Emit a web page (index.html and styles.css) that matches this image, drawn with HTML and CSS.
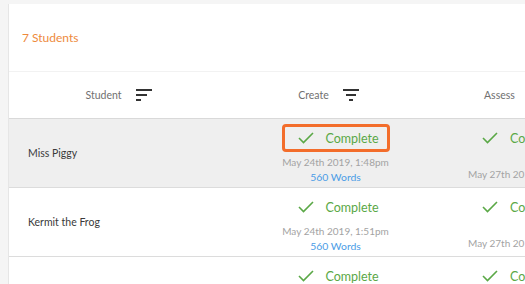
FILE: index.html
```html
<!DOCTYPE html>
<html>
<head>
<meta charset="utf-8">
<link rel="stylesheet" href="styles.css">
</head>
<body>
<div class="card">
  <div class="card-head"><span class="count">7 Students</span></div>
  <div class="table">
    <div class="th"><span>Student</span>
      <svg class="ico" width="16" height="12" viewBox="0 0 16 12"><rect x="0" y="0" width="16" height="2" fill="#333"/><rect x="0" y="5" width="11" height="2" fill="#333"/><rect x="0" y="10" width="5" height="2" fill="#333"/></svg>
    </div>
    <div class="th"><span>Create</span>
      <svg class="ico" width="16" height="12" viewBox="0 0 16 12"><rect x="0" y="0" width="16" height="2" fill="#333"/><rect x="3" y="5" width="10" height="2" fill="#333"/><rect x="6" y="10" width="4" height="2" fill="#333"/></svg>
    </div>
    <div class="th"><span>Assess</span>
      <svg class="ico" width="16" height="12" viewBox="0 0 16 12"><rect x="0" y="0" width="16" height="2" fill="#333"/><rect x="3" y="5" width="10" height="2" fill="#333"/><rect x="6" y="10" width="4" height="2" fill="#333"/></svg>
    </div>

    <div class="td name sel">Miss Piggy</div>
    <div class="td cell sel">
      <div class="status active"><svg class="chk" width="16" height="12" viewBox="0 0 16 12"><polyline points="1,6 5.5,10.5 15,1" fill="none" stroke="#5aa846" stroke-width="1.6"/></svg><span>Complete</span></div>
      <div class="date">May 24th 2019, 1:48pm</div>
      <div class="words">560 Words</div>
    </div>
    <div class="td cell sel">
      <div class="status"><svg class="chk" width="16" height="12" viewBox="0 0 16 12"><polyline points="1,6 5.5,10.5 15,1" fill="none" stroke="#5aa846" stroke-width="1.6"/></svg><span>Complete</span></div>
      <div class="date blank">&nbsp;</div>
      <div class="date">May 27th 2019, 9:12am</div>
    </div>

    <div class="td name">Kermit the Frog</div>
    <div class="td cell">
      <div class="status"><svg class="chk" width="16" height="12" viewBox="0 0 16 12"><polyline points="1,6 5.5,10.5 15,1" fill="none" stroke="#5aa846" stroke-width="1.6"/></svg><span>Complete</span></div>
      <div class="date">May 24th 2019, 1:51pm</div>
      <div class="words">560 Words</div>
    </div>
    <div class="td cell">
      <div class="status"><svg class="chk" width="16" height="12" viewBox="0 0 16 12"><polyline points="1,6 5.5,10.5 15,1" fill="none" stroke="#5aa846" stroke-width="1.6"/></svg><span>Complete</span></div>
      <div class="date blank">&nbsp;</div>
      <div class="date">May 27th 2019, 9:15am</div>
    </div>

    <div class="td name">Fozzie Bear</div>
    <div class="td cell">
      <div class="status"><svg class="chk" width="16" height="12" viewBox="0 0 16 12"><polyline points="1,6 5.5,10.5 15,1" fill="none" stroke="#5aa846" stroke-width="1.6"/></svg><span>Complete</span></div>
      <div class="date">May 24th 2019, 1:55pm</div>
      <div class="words">560 Words</div>
    </div>
    <div class="td cell">
      <div class="status"><svg class="chk" width="16" height="12" viewBox="0 0 16 12"><polyline points="1,6 5.5,10.5 15,1" fill="none" stroke="#5aa846" stroke-width="1.6"/></svg><span>Complete</span></div>
      <div class="date blank">&nbsp;</div>
      <div class="date">May 27th 2019, 9:20am</div>
    </div>
  </div>
</div>
</body>
</html>
```
FILE: styles.css
```css
html, body {
  margin: 0;
  padding: 0;
  background: #f5f5f5;
  overflow: hidden;
  font-family: Lato, "Noto Sans", sans-serif;
}
.card {
  margin: 4px 0 0 8px;
  width: 700px;
  background: #fff;
  border-left: 1px solid #e6e6e6;
}
.card-head {
  height: 67px;
  display: flex;
  align-items: center;
  padding-left: 13px;
  border-bottom: 1px solid #f2f2f2;
}
.count {
  color: #ee8a3c;
  font-size: 12px;
}
.table {
  display: grid;
  grid-template-columns: 233px 187px 187px 92px;
}
.th {
  height: 46px;
  display: flex;
  align-items: center;
  justify-content: center;
  gap: 14px;
  padding-right: 14px;
  font-size: 10.5px;
  color: #707070;
  border-bottom: 1px solid #d9d9d9;
}
.th:nth-child(3) { grid-column: span 2; justify-content: flex-start; padding-left: 55px; }
.ico { display: block; }
.td {
  height: 68px;
  border-bottom: 1px solid #dcdcdc;
  box-sizing: content-box;
}
.td.cell:nth-child(3n) { grid-column: span 2; }
.sel { background: #efefef; }
.name {
  display: flex;
  align-items: center;
  padding-left: 19px;
  font-size: 10.5px;
  color: #3a3a3a;
}
.cell {
  display: flex;
  flex-direction: column;
  align-items: flex-start;
  padding-top: 5px;
  box-sizing: border-box;
  height: 69px;
}
.cell:nth-child(3n+2) { align-items: center; }
.cell:nth-child(3n) { padding-left: 37px; }
.status {
  display: flex;
  align-items: center;
  gap: 12px;
  width: 108px;
  height: 28px;
  box-sizing: border-box;
  padding-left: 13px;
  border: 3px solid transparent;
  border-radius: 4px;
  color: #5aa846;
  font-size: 12.5px;
}
.status.active { border-color: #f36d2b; }
.chk { display: block; }
.date {
  margin-top: 3px;
  font-size: 10px;
  line-height: 15px;
  color: #a3a3a3;
}
.cell:nth-child(3n) .date { margin-top: 0; padding-left: 2px; }
.words {
  font-size: 10.4px;
  line-height: 15px;
  color: #4a9ce6;
}
```
